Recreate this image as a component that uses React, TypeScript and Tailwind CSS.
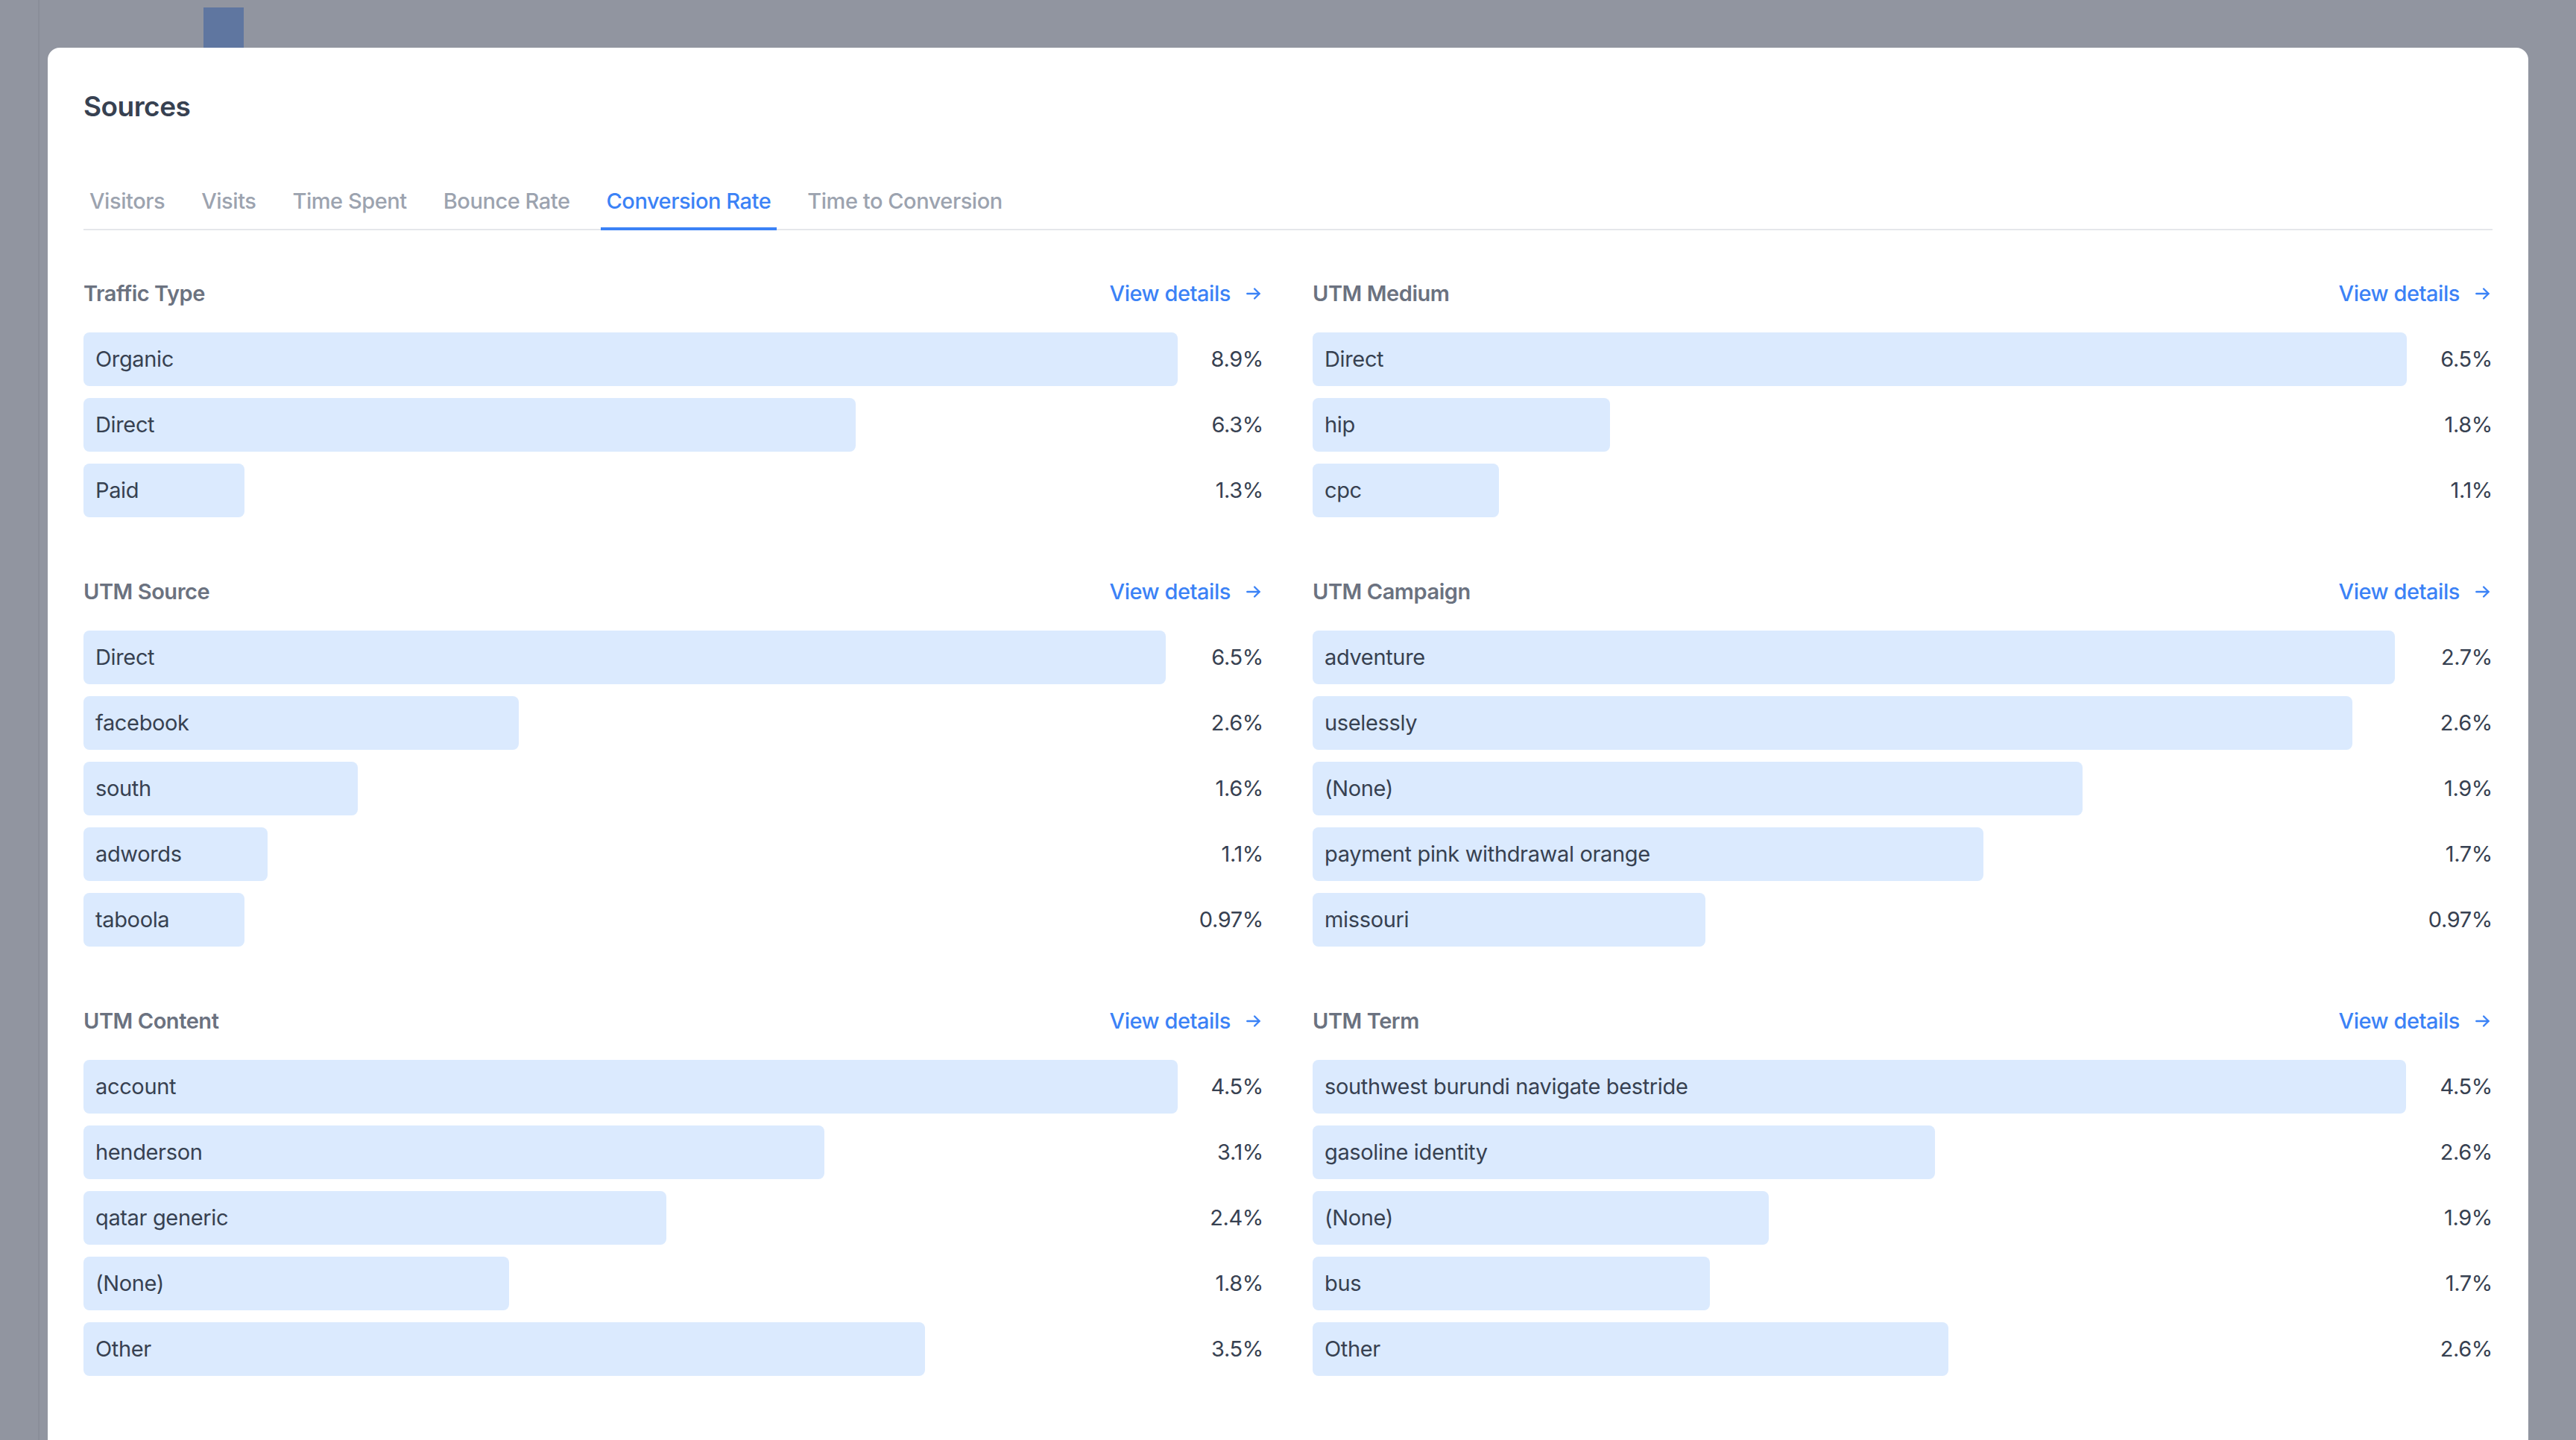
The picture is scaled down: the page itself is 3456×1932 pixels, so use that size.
import React from "react";

type Row = { label: string; value: string; frac: number };
type Section = { title: string; rows: Row[] };

const sections: Section[] = [
  {
    title: "Traffic Type",
    rows: [
      { label: "Organic", value: "8.9%", frac: 1 },
      { label: "Direct", value: "6.3%", frac: 0.706 },
      { label: "Paid", value: "1.3%", frac: 0.147 },
    ],
  },
  {
    title: "UTM Medium",
    rows: [
      { label: "Direct", value: "6.5%", frac: 1 },
      { label: "hip", value: "1.8%", frac: 0.272 },
      { label: "cpc", value: "1.1%", frac: 0.17 },
    ],
  },
  {
    title: "UTM Source",
    rows: [
      { label: "Direct", value: "6.5%", frac: 0.989 },
      { label: "facebook", value: "2.6%", frac: 0.398 },
      { label: "south", value: "1.6%", frac: 0.251 },
      { label: "adwords", value: "1.1%", frac: 0.168 },
      { label: "taboola", value: "0.97%", frac: 0.147 },
    ],
  },
  {
    title: "UTM Campaign",
    rows: [
      { label: "adventure", value: "2.7%", frac: 0.989 },
      { label: "uselessly", value: "2.6%", frac: 0.95 },
      { label: "(None)", value: "1.9%", frac: 0.704 },
      { label: "payment pink withdrawal orange", value: "1.7%", frac: 0.613 },
      { label: "missouri", value: "0.97%", frac: 0.359 },
    ],
  },
  {
    title: "UTM Content",
    rows: [
      { label: "account", value: "4.5%", frac: 1 },
      { label: "henderson", value: "3.1%", frac: 0.677 },
      { label: "qatar generic", value: "2.4%", frac: 0.533 },
      { label: "(None)", value: "1.8%", frac: 0.389 },
      { label: "Other", value: "3.5%", frac: 0.769 },
    ],
  },
  {
    title: "UTM Term",
    rows: [
      { label: "southwest burundi navigate bestride", value: "4.5%", frac: 0.999 },
      { label: "gasoline identity", value: "2.6%", frac: 0.569 },
      { label: "(None)", value: "1.9%", frac: 0.417 },
      { label: "bus", value: "1.7%", frac: 0.363 },
      { label: "Other", value: "2.6%", frac: 0.581 },
    ],
  },
];

const tabs = ["Visitors", "Visits", "Time Spent", "Bounce Rate", "Conversion Rate", "Time to Conversion"];

function Arrow() {
  return (
    <svg width="26" height="26" viewBox="0 0 24 24" fill="none" stroke="#3b82f6" strokeWidth="2.2" strokeLinecap="round" strokeLinejoin="round">
      <path d="M4 12h15" />
      <path d="M13 6l6 6-6 6" />
    </svg>
  );
}

function SectionBlock({ s }: { s: Section }) {
  return (
    <div className="flex flex-col">
      <div className="flex h-[40px] items-center justify-between">
        <span className="text-[29px] font-semibold tracking-[-0.45px] text-[#6b7280]">{s.title}</span>
        <span className="flex items-center gap-[18px] text-[29px] font-medium tracking-[-0.45px] text-[#3b82f6]">
          View details
          <Arrow />
        </span>
      </div>
      <div className="mt-[32px] flex flex-col gap-[16px]">
        {s.rows.map((r, i) => (
          <div key={i} className="flex items-center">
            <div className="flex-1">
              <div
                className="flex h-[72px] items-center rounded-[8px] bg-[#dbeafe] px-[16px] text-[29px] tracking-[-0.35px] whitespace-nowrap text-[#374151]"
                style={{ width: `${r.frac * 100}%` }}
              >
                {r.label}
              </div>
            </div>
            <div className="w-[115px] text-right text-[29px] tracking-[-0.35px] text-[#374151]">{r.value}</div>
          </div>
        ))}
      </div>
    </div>
  );
}

export default function App() {
  return (
    <div
      className="relative h-[1932px] w-[3456px] overflow-hidden bg-[#9195a0]"
      style={{ fontFamily: "Inter, 'Noto Sans', sans-serif" }}
    >
      <div className="absolute left-[51px] top-0 h-full w-[2px] bg-[#8a8e99]" />
      <div className="absolute left-[273px] top-[10px] h-[54px] w-[54px] bg-[#5f76a0]" />
      <div className="relative px-[64px] pt-[64px]">
        <div className="h-[1868px] rounded-t-[16px] bg-white px-[48px] pt-[55px]">
          <h2 className="h-[48px] text-[37px] leading-[48px] font-semibold tracking-[-0.5px] text-[#374151]">Sources</h2>
          <div className="mt-[62px] flex gap-[33px] border-b-2 border-[#e5e7eb]">
            {tabs.map((t) => (
              <div
                key={t}
                className={
                  t === "Conversion Rate"
                    ? "-mb-[2px] border-b-4 border-[#3b82f6] px-[8px] pt-[21px] pb-[15px] text-[29px] leading-[40px] font-medium tracking-[-0.45px] text-[#3b82f6]"
                    : "-mb-[2px] border-b-4 border-transparent px-[8px] pt-[21px] pb-[15px] text-[29px] leading-[40px] font-medium tracking-[-0.45px] text-[#9ca3af]"
                }
              >
                {t}
              </div>
            ))}
          </div>
          <div className="mt-[65px] grid grid-cols-2 gap-x-[66px] gap-y-[80px]">
            {sections.map((s) => (
              <SectionBlock key={s.title} s={s} />
            ))}
          </div>
        </div>
      </div>
    </div>
  );
}
